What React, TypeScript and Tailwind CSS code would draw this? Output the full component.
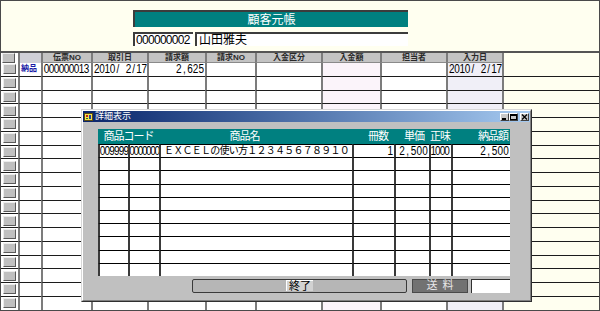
import React from "react";

const MAIN_COLS =
  "grid grid-cols-[17px_23px_50px_56px_58px_50px_66px_59px_66px_56px_1fr]";
const HEADS = ["", "", "伝票NO", "取引日", "請求額", "請求NO", "入金区分", "入金額", "担当者", "入力日", ""];
const CELL_BG = [
  "bg-white",
  "bg-white",
  "bg-white",
  "bg-white",
  "bg-white",
  "bg-white",
  "bg-white",
  "bg-[#fbf4fa]",
  "bg-white",
  "bg-[#f0eff7]",
  "bg-[#fffff0]",
];

// fixed-pitch, tall digits like the old bitmap gothic font
function Num({ text, cw = "w-[5.3px]" }: { text: string; cw?: string }) {
  return (
    <span className="inline-flex scale-y-[1.2] text-[10px] leading-none text-black">
      {text.split("").map((c, i) => (
        <span key={i} className={`${cw} inline-flex justify-center`}>
          {c === " " ? "\u00a0" : c}
        </span>
      ))}
    </span>
  );
}

const FIRST_ROW: React.ReactNode[] = [
  null,
  <span className="text-[#1a1aa6] text-[8px] font-bold">納品</span>,
  <Num text="000000013" cw="w-[5px]" />,
  <Num text="2010/ 2/17" />,
  <Num text="2,625" cw="w-[5.6px]" />,
  "",
  "",
  "",
  "",
  <Num text="2010/ 2/17" />,
  "",
];

const D_COLS = "grid grid-cols-[30px_31px_193px_42px_35px_22px_59px]";
const D_FIRST: React.ReactNode[] = [
  <Num text="009999" cw="w-[4.8px]" />,
  <Num text="0000000" cw="w-[4.2px]" />,
  <span className="text-[10px] tracking-[-0.75px]">ＥＸＣＥＬの使い方１２３４５６７８９１０</span>,
  <Num text="1" />,
  <Num text="2,500" cw="w-[5.8px]" />,
  <Num text="1000" cw="w-[4.6px]" />,
  <Num text="2,500" cw="w-[5.8px]" />,
];

function RowButton() {
  return (
    <div className="ml-[1px] w-[13px] h-[10px] bg-[#c0c0c0] border border-t-[#ececec] border-l-[#ececec] border-b-[#5a5a5a] border-r-[#5a5a5a]" />
  );
}

function HeaderRow() {
  return (
    <div className={`${MAIN_COLS} h-[10px]`}>
      {HEADS.map((h, i) => {
        if (i === 0)
          return (
            <div key={i} className="bg-white flex items-center">
              <RowButton />
            </div>
          );
        if (i === 1)
          return <div key={i} className="bg-[#cfcfd6] border-l-2 border-[#7c7c7c]" />;
        if (i === 10) return <div key={i} className="bg-[#fffff0] border-l-2 border-[#7c7c7c]" />;
        return (
          <div
            key={i}
            className="bg-[#c3c3c3] border-l-2 border-[#7c7c7c] border-b border-b-[#8a8a8a] flex items-center justify-center text-[8px] leading-none font-bold text-[#2a2a2a]"
          >
            {h}
          </div>
        );
      })}
    </div>
  );
}

function MainRow({ values }: { values?: React.ReactNode[] }) {
  return (
    <div className={`${MAIN_COLS} h-[13.75px]`}>
      {HEADS.map((_, i) => (
        <div
          key={i}
          className={`${CELL_BG[i]} ${i > 0 ? "border-l-2 border-l-[#7c7c7c]" : ""} ${
            i === 4 ? "justify-end pr-[1px]" : "pl-[1px]"
          } border-b border-b-[#1c1c1c] flex items-center overflow-hidden whitespace-nowrap text-[11px] leading-none text-black`}
        >
          {i === 0 ? <RowButton /> : values?.[i]}
        </div>
      ))}
    </div>
  );
}

function TitleButton({ kind }: { kind: "min" | "max" | "close" }) {
  return (
    <div className="w-[9px] h-[8px] bg-[#c8c8c8] border border-t-white border-l-white border-b-[#404040] border-r-[#404040] flex items-center justify-center">
      <svg width="7" height="6" viewBox="0 0 7 6">
        {kind === "min" && <rect x="1" y="4" width="4" height="2" fill="#000" />}
        {kind === "max" && (
          <>
            <rect x="0.5" y="0.5" width="6" height="5" fill="none" stroke="#000" />
            <rect x="0" y="0" width="7" height="2" fill="#000" />
          </>
        )}
        {kind === "close" && <path d="M1 0.5 L6 5.5 M6 0.5 L1 5.5" stroke="#000" strokeWidth="1.3" />}
      </svg>
    </div>
  );
}

function DetailRow({ values }: { values?: React.ReactNode[] }) {
  const align = [
    "justify-start",
    "justify-start",
    "justify-start pl-[3px]",
    "justify-end pr-[1px]",
    "justify-end pr-[1px]",
    "justify-start",
    "justify-end pr-[1px]",
  ];
  return (
    <div className={`${D_COLS} h-[13.2px]`}>
      {align.map((a, i) => (
        <div
          key={i}
          className={`${a} bg-white border-t border-t-black border-l-2 border-l-[#3a3a3a] flex items-center overflow-hidden whitespace-nowrap leading-none text-black`}
        >
          {values?.[i]}
        </div>
      ))}
    </div>
  );
}

function DetailWindow() {
  return (
    <div className="absolute left-[80px] top-[108px] w-[451px] h-[193px] border border-t-[#d8d8d8] border-l-[#d8d8d8] border-b-[#303030] border-r-[#303030]">
      <div className="w-full h-full bg-[#c0c0c0] border border-t-white border-l-white border-b-[#808080] border-r-[#808080] flex flex-col">
        {/* title bar */}
        <div className="h-[11px] bg-linear-to-r from-[#0a246a] to-[#a6caf0] flex items-center pl-[1px] pr-[1px]">
          <svg width="9" height="8" viewBox="0 0 9 8">
            <rect x="0" y="0" width="9" height="8" fill="#f4e04a" />
            <rect x="0.5" y="0.5" width="8" height="7" fill="none" stroke="#5a4a10" />
            <rect x="2" y="2" width="2" height="2" fill="#c02020" />
            <rect x="5" y="2" width="2" height="4" fill="#2040a0" />
            <rect x="2" y="5" width="2" height="1" fill="#208020" />
          </svg>
          <span className="ml-[2px] text-white text-[9px] leading-none">詳細表示</span>
          <div className="ml-auto flex items-center">
            <TitleButton kind="min" />
            <TitleButton kind="max" />
            <div className="w-[2px]" />
            <TitleButton kind="close" />
          </div>
        </div>
        {/* body */}
        <div className="flex-1 pl-[15px] pt-[7px]">
          <div className="w-[412px]">
            <div className={`${D_COLS} h-[15px] bg-[#008080] text-white text-[11px] leading-none tracking-[-1px]`}>
              <div className="col-span-2 flex items-center justify-center">商品コード</div>
              <div className="flex items-center justify-center pr-[22px]">商品名</div>
              <div className="flex items-center justify-end pr-[6px]">冊数</div>
              <div className="flex items-center justify-end pr-[5px]">単価</div>
              <div className="flex items-center justify-start pl-[1px]">正味</div>
              <div className="flex items-center justify-end pr-[2px]">納品額</div>
            </div>
            <DetailRow values={D_FIRST} />
            {Array.from({ length: 9 }).map((_, i) => (
              <DetailRow key={i} />
            ))}
          </div>
          <div className="w-[412px] mt-[3px] flex justify-end items-center h-[14px]">
            <div className="w-[215px] h-[14px] bg-[#b6b6b6] border border-[#3a3a3a] rounded-[2px] flex items-center justify-center">
              <div className="px-[2px] h-[11px] bg-[#d2d2d2] border-t border-l border-t-white border-l-white text-[11px] leading-none text-black flex items-center">
                終了
              </div>
            </div>
            <div className="ml-[5px] w-[56px] h-[14px] bg-[#727272] border border-[#4a4a4a] flex items-center justify-center text-[11px] leading-none text-[#e8e8e8] tracking-[5px] pl-[5px]">
              送料
            </div>
            <div className="ml-[3px] w-[39px] h-[14px] bg-white border-t border-l border-t-[#303030] border-l-[#303030]" />
          </div>
        </div>
      </div>
    </div>
  );
}

export default function App() {
  return (
    <div className="relative w-[600px] h-[311px] overflow-hidden bg-[#fffff0] border border-[#4a4a4a] font-['Liberation_Sans','Noto_Sans_CJK_JP',sans-serif]">
      <header className="h-[50px] pl-[132px] pt-[9px]">
        <div className="w-[275px] h-[17px] bg-[#008080] border-t-2 border-l-2 border-[#3c3c3c] flex items-center justify-center text-white text-[12px] leading-none">
          顧客元帳
        </div>
        <div className="mt-[5px] flex gap-[2px]">
          <div className="w-[60px] h-[14px] bg-white border-t-2 border-l-2 border-[#3c3c3c] flex items-center pl-[1px] text-[12px] leading-none tracking-[-0.7px] text-black">
            000000002
          </div>
          <div className="w-[213px] h-[14px] bg-white border-t-2 border-l-2 border-[#3c3c3c] flex items-center pl-[2px] text-[12px] leading-none text-black">
            山田雅夫
          </div>
        </div>
      </header>
      <div className="border-t-2 border-[#555555]">
        <HeaderRow />
        <MainRow values={FIRST_ROW} />
        {Array.from({ length: 17 }).map((_, i) => (
          <MainRow key={i} />
        ))}
      </div>
      <DetailWindow />
    </div>
  );
}
